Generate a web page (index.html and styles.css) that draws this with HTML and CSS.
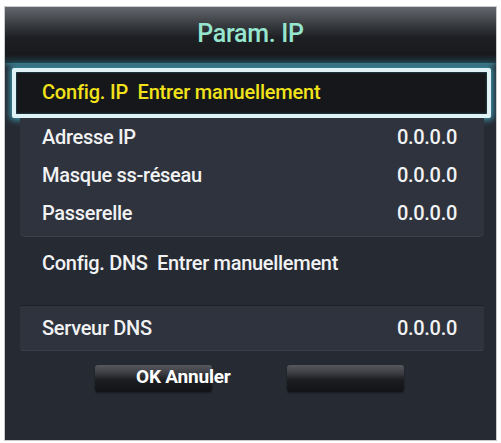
FILE: index.html
```html
<!DOCTYPE html>
<html lang="fr">
<head>
    <meta charset="UTF-8">
    <title>Param. IP</title>
    <link rel="stylesheet" href="styles.css">
</head>
<body>
    <div class="dialog">
        <div class="dialog-header">
            <h1>Param. IP</h1>
        </div>

        <div class="selected-row">
            <span>Config. IP&nbsp; Entrer manuellement</span>
        </div>

        <div class="group">
            <div class="row">
                <span>Adresse IP</span>
                <span>0.0.0.0</span>
            </div>
            <div class="row">
                <span>Masque ss-réseau</span>
                <span>0.0.0.0</span>
            </div>
            <div class="row">
                <span>Passerelle</span>
                <span>0.0.0.0</span>
            </div>
        </div>

        <div class="dns-config">
            <span>Config. DNS&nbsp; Entrer manuellement</span>
        </div>

        <div class="group dns-server">
            <div class="row">
                <span>Serveur DNS</span>
                <span>0.0.0.0</span>
            </div>
        </div>

        <div class="buttons">
            <button class="btn btn-ok">OK Annuler</button>
            <button class="btn"></button>
        </div>
    </div>
</body>
</html>
```

FILE: styles.css
```css
body {
    margin: 0;
    background-color: #fff;
    font-family: Roboto, 'Noto Sans', sans-serif;
}

.dialog {
    margin: 6px 0 0 4px;
    width: 491px;
    height: 433px;
    border: 1px solid #c9cacc;
    background-color: #262a33;
    overflow: hidden;
}

.dialog-header {
    height: 56px;
    background: linear-gradient(#64676d 0%, #3a3d42 30%, #1d1f23 55%, #17191c 85%, #1f3a44 100%);
    box-shadow: 0 2px 5px rgba(80, 200, 220, 0.55);
    display: flex;
    justify-content: center;
}

.dialog-header h1 {
    margin: 0;
    padding-top: 12px;
    font-size: 25px;
    font-weight: 500;
    color: #96e6cf;
    letter-spacing: -0.3px;
}

.selected-row {
    margin: 5px 5px 0 7px;
    height: 42px;
    border: 4px solid #dff3f6;
    border-radius: 2px;
    background-color: #16171b;
    box-shadow: 0 0 6px 2px rgba(70, 190, 215, 0.75), inset 0 0 2px rgba(70, 190, 215, 0.6);
    display: flex;
    align-items: center;
    padding-left: 26px;
}

.selected-row span {
    color: #f2e21a;
    font-size: 20px;
    font-weight: 500;
    letter-spacing: -0.2px;
    margin-top: -2px;
}

.group {
    margin: 0 12px 0 15px;
    background-color: #2f333d;
    border-radius: 0 0 5px 5px;
    padding-bottom: 4px;
    box-shadow: 0 1px 0 #3b3f49;
}

.row {
    height: 38px;
    display: flex;
    justify-content: space-between;
    align-items: center;
    padding: 0 27px 0 22px;
    color: #f1f2f3;
    font-size: 20px;
    font-weight: 500;
    letter-spacing: -0.3px;
}

.dns-config {
    height: 69px;
    box-sizing: border-box;
    padding: 15px 0 0 42px;
    margin-left: -5px;
    color: #f1f2f3;
    font-size: 20px;
    font-weight: 500;
    letter-spacing: -0.3px;
}

.dns-server {
    border-top: 1px solid #1d2026;
    border-radius: 0 0 3px 3px;
    padding-bottom: 0;
}

.dns-server .row {
    height: 44px;
}

.buttons {
    display: flex;
    gap: 75px;
    margin: 15px 0 0 90px;
}

.btn {
    width: 117px;
    height: 27px;
    border: none;
    border-radius: 3px;
    background: linear-gradient(#57595e 0%, #3b3d42 30%, #1c1d21 55%, #121316 100%);
    box-shadow: 0 1px 2px rgba(0, 0, 0, 0.4);
    padding: 0;
}

.btn-ok {
    color: #fff;
    font-family: Roboto, sans-serif;
    font-size: 19px;
    font-weight: 700;
    letter-spacing: -0.2px;
    text-align: left;
    padding: 0 0 5px 41px;
    white-space: nowrap;
    overflow: visible;
}
```
